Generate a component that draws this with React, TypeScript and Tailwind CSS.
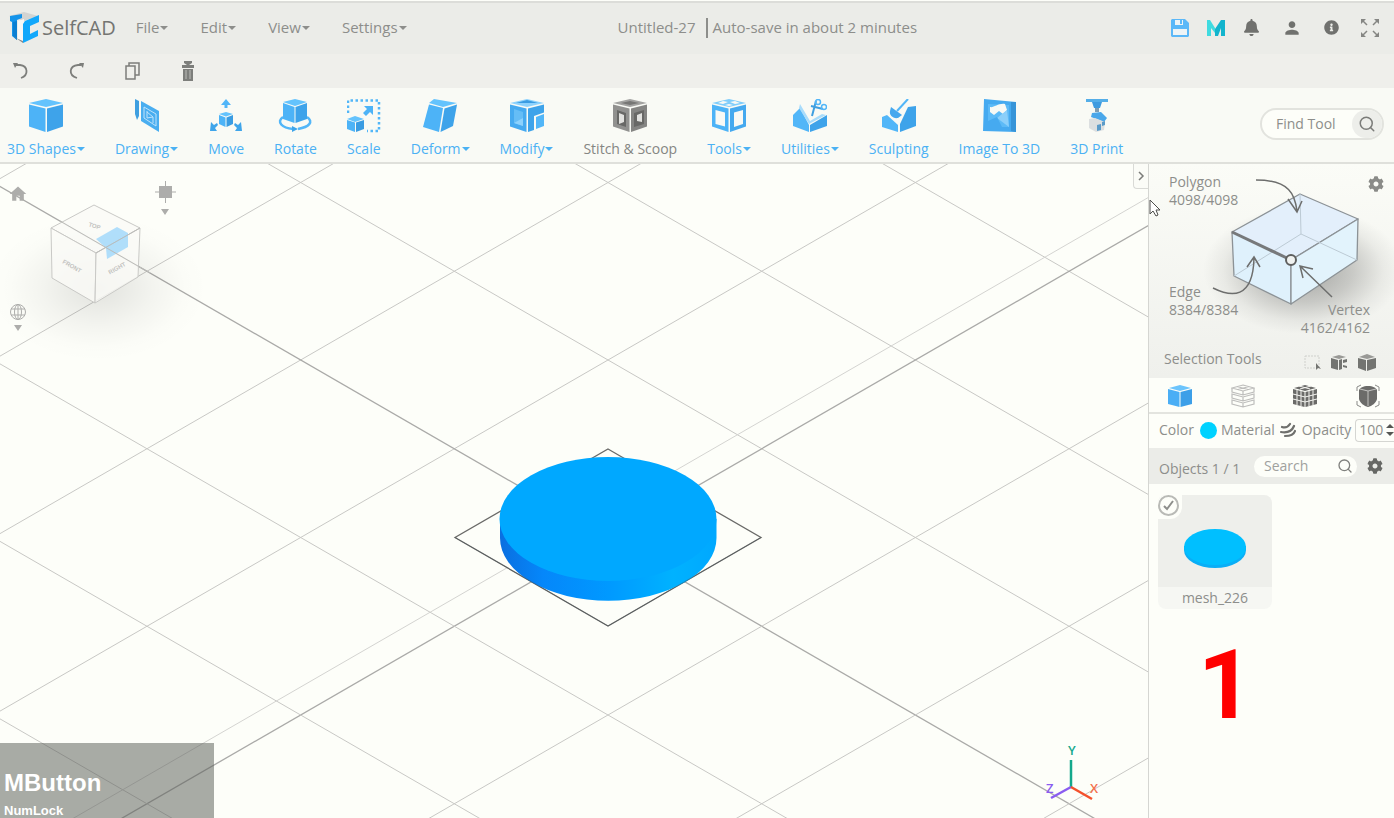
import React, { useState } from 'react';
import { FaBell, FaCog, FaInfoCircle } from 'react-icons/fa';
import { MdHome, MdPerson } from 'react-icons/md';
import { FiSearch } from 'react-icons/fi';

const menus = ['File', 'Edit', 'View', 'Settings'];

const Caret = () => (
    <svg width="8" height="4" viewBox="0 0 8 4" fill="currentColor" aria-hidden="true">
        <path d="M0 0h8L4 4z" />
    </svg>
);

const Logo = () => (
    <svg width="32" height="32" viewBox="0 0 32 32" aria-hidden="true">
        <path d="M1 4 16 0l14 4-14 5z" fill="#d3d4d2" />
        <path d="M2 4 14 2v4L9 8v20l-5-4V10L2 9z" fill="#1494ea" />
        <path d="M5 10l4-1v19l-4-4z" fill="#0b7fd2" />
        <path d="M10 9 16 7v23l-6-3z" fill="#f8f8f6" />
        <path d="M17 9 31 3v7l-9 4v8l8-4v6L15 31V12z" fill="#12a8fb" />
        <path d="M15 31 5 24l5 3 5 2z" fill="#8a8b89" />
    </svg>
);

const cube = (
    <>
        <path d="M17 0 34 4 17 8 0 4z" fill="#64c3fd" />
        <path d="M0 5.500 16.500 9.500V33L0 27.500z" fill="#4db3f7" />
        <path d="M18 9.500 34 5.500v22L18 33z" fill="#3ea3ea" />
    </>
);

const ribbon = [
    { label: '3D Shapes', menu: true, icon: cube },
    {
        label: 'Drawing',
        menu: true,
        icon: (
            <>
                <path d="M5 0l4 2v15l-2 4-2-6z" fill="#3f9fe0" />
                <path d="M11 2 29 12v21L11 22z" fill="#4aaef0" />
                <path d="M14 8l12 7v12l-12-8zM17 12v7l6-1-6-5M23 18v6" fill="none" stroke="#bfe3fb" strokeWidth="1" />
            </>
        ),
    },
    {
        label: 'Move',
        icon: (
            <>
                <path d="M17 0l5 6h-3.500v3h-3V6H12z" fill="#52b6f8" />
                <path d="M17 13l7 2-7 2.500-7-2.500z" fill="#64c3fd" />
                <path d="M10 16l6.500 2.500V28L10 25z" fill="#4db3f7" />
                <path d="M17.500 18.500 24 16v9l-6.500 3z" fill="#3a9ce2" />
                <path d="M1 32 2 23l3 3 3-2 1 2-3 3 2 3zM33 32l-1-9-3 3-3-2-1 2 3 3-2 3z" fill="#3fa5ea" />
            </>
        ),
    },
    {
        label: 'Rotate',
        icon: (
            <>
                <path d="M5 18C-2 23 4 29 15 30M29 18c7 5 2 10-9 12" fill="none" stroke="#52b6f8" strokeWidth="2.500" />
                <path d="M14 27l6 3-6 3z" fill="#3fa5ea" />
                <path d="M17 0l12 3-12 4L5 3z" fill="#64c3fd" />
                <path d="M5 4l11.500 4v16L5 20z" fill="#4db3f7" />
                <path d="M17.500 8 29 4v16l-11.500 4z" fill="#3ea3ea" />
            </>
        ),
    },
    {
        label: 'Scale',
        icon: (
            <>
                <path d="M1 14V1.500h31V32H20" fill="none" stroke="#52b6f8" strokeWidth="2.500" strokeDasharray="2.500 2.500" />
                <path d="M17 7h9v9l-3-3-4 4-3-3 4-4z" fill="#4db3f7" />
                <path d="M8 17l9 3-9 3-8-3z" fill="#64c3fd" />
                <path d="M0 21l8 2.500V33l-8-3z" fill="#4db3f7" />
                <path d="M9 23.500 17 21v9l-8 3z" fill="#3a9ce2" />
            </>
        ),
    },
    {
        label: 'Deform',
        menu: true,
        icon: (
            <>
                <path d="M11 0l23 4-14 4L6 4z" fill="#64c3fd" />
                <path d="M6 5.500 20 9l-4 24L0 28z" fill="#4db3f7" />
                <path d="M21.500 9.500 34 5.500 30 27l-12.500 6z" fill="#3ea3ea" />
            </>
        ),
    },
    {
        label: 'Modify',
        menu: true,
        icon: (
            <>
                <path d="M17 0 34 4 17 8 0 4z" fill="#8dd2fd" />
                <path d="M17 1l11 3H6z" fill="#3a9ce2" />
                <path d="M0 5.500 16.500 9.500V33L0 27.500z" fill="#46aaf0" />
                <path d="M4 10l9 3v14l-9-3z" fill="#65bdf6" />
                <path d="M4 24l9-5v8z" fill="#8dd2fd" />
                <path d="M18 9.500 34 5.500v8L24 17v14l-6 2z" fill="#3ea3ea" />
                <path d="M26 18l8-3v12l-8 3z" fill="#52b6f8" />
            </>
        ),
    },
    {
        label: 'Stitch & Scoop',
        gray: true,
        icon: (
            <>
                <path d="M17 0 34 4 17 8 0 4z" fill="#a3a3a1" />
                <path d="M17 2l9 2-9 2-9-2z" fill="#777775" />
                <path d="M0 5.500 16.500 9.500V33L0 27.500z" fill="#91918f" />
                <path d="M18 9.500 34 5.500v22L18 33z" fill="#858583" />
                <path d="M4 11l9 3v14l-9-3zM21 14l10-3v14l-10 3z" fill="#686866" />
                <path d="M6 14l5 2v7l-5 2zM24 16l5-2v9l-5-1z" fill="#e2e2df" />
            </>
        ),
    },
    {
        label: 'Tools',
        menu: true,
        icon: (
            <>
                <path d="M17 0 34 4 17 8 0 4z" fill="#7fcdfb" />
                <path d="M11 2l5 1-5 2-5-1zM23 2l5 2-5 1-5-2zM17 5l4 1-4 1-4-1z" fill="#f8f9f5" />
                <path d="M0 5.500 16.500 9.500V33L0 27.500z" fill="#4db3f7" />
                <path d="M18 9.500 34 5.500v22L18 33z" fill="#45a9ef" />
                <path d="M3.500 11 13 13.500v14L3.500 25zM22 13.500 31 11v14l-9 3z" fill="#f8f9f5" />
            </>
        ),
    },
    {
        label: 'Utilities',
        menu: true,
        icon: (
            <>
                <path d="M0 16 7 9l9 17v7L0 27z" fill="#52b6f8" />
                <path d="M17 26 34 16v11l-17 6z" fill="#3ea3ea" />
                <path d="M7 5l10 17 12-7 4 1-17 9L6 9z" fill="#a9dcfb" />
                <path d="M23 2 19 17M30 10 18 7" stroke="#3f9fe0" strokeWidth="2" />
                <circle cx="25" cy="3" r="2.500" fill="none" stroke="#52b6f8" strokeWidth="1.500" />
                <circle cx="31" cy="8" r="2.500" fill="none" stroke="#52b6f8" strokeWidth="1.500" />
            </>
        ),
    },
    {
        label: 'Sculpting',
        icon: (
            <>
                <path d="M0 18l5-2 11 10v7L0 28z" fill="#52b6f8" />
                <path d="M18 25 26 8l8-1v20l-16 6z" fill="#3ea3ea" />
                <path d="M26 0 15 12" stroke="#52b6f8" strokeWidth="2" />
                <path d="M9 8l11 8-4 3c-5 1-9-3-8-7z" fill="#46a8ee" />
            </>
        ),
    },
    {
        label: 'Image To 3D',
        icon: (
            <>
                <path d="M2 0l32 3v30L1 32z" fill="#46aaf0" />
                <path d="M29 3l5 0v30l-5-1z" fill="#3794d8" />
                <path d="M6 5l21 1v22L6 28z" fill="#5cbaf7" />
                <path d="M8 8c4 1 8-4 15-3l2 6-4 4-4-3-5 4-4-3z" fill="#f8f9f5" />
                <path d="M15 19l10-8 2 17z" fill="#8bcffa" />
                <path d="M6 22l9-4 5 10H6z" fill="#46aaf0" />
            </>
        ),
    },
    {
        label: '3D Print',
        icon: (
            <>
                <path d="M6 0h22v3H6z" fill="#55aee8" />
                <path d="M12 3h10l-2 6h-6z" fill="#3f9be0" />
                <path d="M15 9h4v4h-4z" fill="#7f9db3" />
                <path d="M12 14l9-1 6 6-3 4-13-5z" fill="#4aa7ea" />
                <path d="M9 20l6-1 10 4-1 8-8 2-7-4z" fill="#dcdfe0" />
                <path d="M17 26l4-1v6l-4 1zM22 23l3-1v4l-3 1z" fill="#5b9bc8" />
            </>
        ),
    },
];

const SmallCube = ({ kind }: { kind: string }) => (
    <svg width="24" height="24" viewBox="0 0 24 24" aria-hidden="true">
        {kind === 'solid' && (
            <>
                <path d="M12 1l11 3-11 3L1 4z" fill="#6cc4fc" />
                <path d="M0 5l11.500 3v15L0 20z" fill="#4aaef5" />
                <path d="M12.500 8 24 5v15l-11.500 3z" fill="#3c9fe8" />
            </>
        )}
        {kind === 'layers' && (
            <g fill="none" stroke="#bdbdbb" strokeWidth="1.200">
                <path d="M12 1l11 3-11 3L1 4zM6 2.500l11 3M18 2.500l-11 3" />
                <path d="M1 4v4l11 3 11-3V4M12 7v4" />
                <path d="M1 10v4l11 3 11-3v-4l-11 3zM12 13v4" />
                <path d="M1 16v4l11 3 11-3v-4l-11 3zM12 19v4" />
            </g>
        )}
        {kind === 'grid' && (
            <>
                <path d="M12 1l11 3-11 3L1 4z" fill="#6b6b69" />
                <path d="M0 5l11.500 3v15L0 20z" fill="#6b6b69" />
                <path d="M12.500 8 24 5v15l-11.500 3z" fill="#6b6b69" />
                <path
                    d="M0 10l12 3 12-3M0 15l12 3 12-3M4 6v15M8 7v15M16 7v15M20 6v15M6 2l11 3M18 2 7 5"
                    fill="none"
                    stroke="#f4f4f0"
                    strokeWidth="1"
                />
            </>
        )}
        {kind === 'round' && (
            <>
                <path d="M12 2c5 0 8 2 9 4v9c-1 4-5 7-9 8-4-1-8-4-9-8V6c1-2 4-4 9-4z" fill="#6b6b69" />
                <path d="M12 7v15M4 5l8 2 8-2" fill="none" stroke="#c4c4c1" strokeWidth="1" />
                <path d="M1 7V3l4-2M19 1l4 2v4M1 17v4l4 2M19 23l4-2v-4" fill="none" stroke="#8a8a88" strokeWidth="1" />
            </>
        )}
    </svg>
);

// Isometric floor grid: both line families share one step and one slope
const GRID_STEP = 177.5;
const SLOPE = 0.5775;
const CX = 608;
const CY = 373.5;
const steps = [-4, -3, -2, -1, 0, 1, 2, 3, 4];

const Scene = () => (
    <svg className="absolute inset-0 h-full w-full" viewBox="0 0 1148 654" preserveAspectRatio="xMidYMid slice" aria-label="3D scene">
        <defs>
            <linearGradient id="rim" x1="0" x2="1">
                <stop offset="0" stopColor="#0a6fe0" />
                <stop offset="0.2" stopColor="#0587fa" />
                <stop offset="0.5" stopColor="#0099ff" />
                <stop offset="0.8" stopColor="#00b2ff" />
                <stop offset="1" stopColor="#00a8ff" />
            </linearGradient>
        </defs>
        {steps.map((k) => (
            <g key={k} stroke={k === 0 ? '#aaaaa8' : '#c8c8c5'} strokeWidth={k === 0 ? 1.3 : 1}>
                <line x1={-200} x2={1348} y1={CY + k * GRID_STEP + SLOPE * (-200 - CX)} y2={CY + k * GRID_STEP + SLOPE * (1348 - CX)} />
                <line x1={-200} x2={1348} y1={CY + k * GRID_STEP - SLOPE * (-200 - CX)} y2={CY + k * GRID_STEP - SLOPE * (1348 - CX)} />
            </g>
        ))}
        <line x1={-200} x2={1348} y1={CY - 28 - SLOPE * (-200 - CX)} y2={CY - 28 - SLOPE * (1348 - CX)} stroke="#d4d4d1" />
        <path d="M608 285 761 373.500 608 462 455 373.500z" fill="#fdfef9" stroke="#6a6a68" strokeWidth="1.300" />
        <path d="M500 355v19a108 62.500 0 0 0 216.500 0v-19z" fill="url(#rim)" />
        <ellipse cx="608" cy="355" rx="108.500" ry="62" fill="#00a8ff" />
        <path d="M455 373.500 608 462 761 373.500" fill="none" stroke="#3e4a52" strokeWidth="1" opacity="0.4" />
    </svg>
);

const ViewCube = () => (
    <div className="absolute top-0 left-0 text-[#adadab]">
        <svg width="220" height="200" viewBox="0 0 220 200" aria-label="View cube">
            <defs>
                <radialGradient id="shade">
                    <stop offset="0" stopColor="#000" stopOpacity="0.110" />
                    <stop offset="0.5" stopColor="#000" stopOpacity="0.040" />
                    <stop offset="0.8" stopColor="#000" stopOpacity="0.008" />
                    <stop offset="1" stopColor="#000" stopOpacity="0" />
                </radialGradient>
            </defs>
            <ellipse cx="98" cy="124" rx="110" ry="74" fill="url(#shade)" />
            <g fill="#fafaf6" fillOpacity="0.820" stroke="#c9c9c6" strokeWidth="1">
                <path d="M94 41l46 23-44 25-45-25z" />
                <path d="M51 64l45 25-1 50-43-25z" />
                <path d="M140 64 96 89l-1 50 43-26z" />
            </g>
            <path d="M96 75l21-12 11 6v14l-21 12-1-11z" fill="#9dd7fb" fillOpacity="0.800" />
            <path d="M96 89 140 64M60 57 150 109" stroke="#bcbcb9" />
            <g fontFamily="Liberation Sans, sans-serif" fontSize="6" fontWeight="700" fill="#c2c2bf" textAnchor="middle">
                <text transform="translate(94 64) rotate(16)">TOP</text>
                <text transform="translate(71 104) rotate(29)">FRONT</text>
                <text transform="translate(118 106) rotate(-29)">RIGHT</text>
            </g>
            <g stroke="currentColor" fill="currentColor">
                <path d="M159 22h13v12h-13z" stroke="none" />
                <path d="M165.500 17v22M155 28h21" />
                <path d="M161 45h8l-4 6zM14 161h8l-4 6z" stroke="none" />
                <circle cx="18" cy="148" r="7.500" fill="none" />
                <ellipse cx="18" cy="148" rx="3.500" ry="7.500" fill="none" />
                <path d="M11 145h14M11 151h14M18 140v16" />
            </g>
        </svg>
    </div>
);

const StatsDrawing = () => (
    <svg className="absolute inset-0" width="245" height="214" viewBox="0 0 245 214" aria-hidden="true">
        <defs>
            <radialGradient id="boxShade">
                <stop offset="0" stopColor="#000" stopOpacity="0.340" />
                <stop offset="0.5" stopColor="#000" stopOpacity="0.180" />
                <stop offset="0.800" stopColor="#000" stopOpacity="0.050" />
                <stop offset="1" stopColor="#000" stopOpacity="0" />
            </radialGradient>
        </defs>
        <ellipse cx="154" cy="106" rx="100" ry="64" fill="url(#boxShade)" />
        <g stroke="#8c9296" strokeWidth="1.300" strokeLinejoin="round">
            <path d="M151 30l58 25-67 41-59-28z" fill="#e3effb" />
            <path d="M83 68l59 28v44l-57-28z" fill="#dff1fc" />
            <path d="M209 55l-67 41v44l66-44z" fill="#e2f3fc" />
        </g>
        <path d="M151 30l1 40-67 42M152 70l56 26" fill="none" stroke="#bccad4" />
        <path d="M83 68l59 28" stroke="#77797b" strokeWidth="3" />
        <circle cx="142" cy="96" r="5" fill="#f0f2f0" stroke="#5e5f5e" strokeWidth="2" />
        <g fill="none" stroke="#6d6e6d" strokeWidth="1.500">
            <path d="M107 16c34 0 39 15 41 31M139 35l9 13 5-11" />
            <path d="M64 124c18 9 40 12 41-30M98 103l7-10 6 10" />
            <path d="M183 133l-32-31M164 105l-13-3 3 12" />
        </g>
    </svg>
);

export default function App() {
    const [tool, setTool] = useState('');
    const [search, setSearch] = useState('');
    const [opacity, setOpacity] = useState('100');

    return (
        <div className="flex min-h-screen flex-col bg-[#fdfef9] font-['Open_Sans',sans-serif] text-[#8d8e8b]">
            <header className="mt-px flex h-[53px] items-center border-t-2 border-[#dcddd9] bg-[#ebece8] pr-[15px] pb-[2px] pl-2 text-[15px]">
                <a href="#home" className="flex items-center gap-[2px] text-xl text-[#747572]">
                    <Logo />
                    SelfCAD
                </a>
                <nav className="ml-5 flex gap-8">
                    {menus.map((m) => (
                        <button key={m} className="flex items-center gap-px">
                            {m}
                            <Caret />
                        </button>
                    ))}
                </nav>
                <div className="ml-[211px] flex items-center gap-[10px]">
                    <span>Untitled-27</span>
                    <span className="flex items-center gap-[5px]">
                        <span className="h-5 w-[2px] bg-[#8d8e8b]" />
                        <span>Auto-save in about 2 minutes</span>
                    </span>
                </div>
                <div className="ml-auto flex items-center gap-[18px] text-[#70716e]">
                    <button aria-label="Save">
                        <svg width="18" height="18" viewBox="0 0 18 18">
                            <path d="M1 0h13l4 4v13l-1 1H1l-1-1V1z" fill="#5bb8f8" />
                            <path d="M4 1h8v5H4zM2 10h14v6H2z" fill="#eef4f6" />
                            <path d="M9 1h2v4H9z" fill="#5bb8f8" />
                        </svg>
                    </button>
                    <button aria-label="MyMiniFactory">
                        <svg width="18" height="18" viewBox="0 0 18 18">
                            <path d="M0 1h3l5 8v5l-4-5v8H0z" fill="#3fdbe0" />
                            <path d="M8 10l6-9h4v16h-4V9l-3 8H8z" fill="#12b4cd" />
                        </svg>
                    </button>
                    <button aria-label="Notifications"><FaBell size={17} /></button>
                    <button aria-label="Account" className="ml-1"><MdPerson size={20} /></button>
                    <button aria-label="Info" className="ml-1"><FaInfoCircle size={15} /></button>
                    <button aria-label="Full screen" className="ml-1">
                        <svg width="18" height="18" viewBox="0 0 18 18" fill="#858683" stroke="#858683">
                            <path d="M0 0h5L0 5zM18 0v5l-5-5zM0 18v-5l5 5zM18 18h-5l5-5z" stroke="none" />
                            <path d="M2 2l4 4M16 2l-4 4M2 16l4-4M16 16l-4-4" strokeWidth="1.500" />
                        </svg>
                    </button>
                </div>
            </header>

            <div className="flex h-[34px] items-center gap-10 bg-[#efefeb] pl-[13px] text-[#7d7e7b]">
                <button aria-label="Undo">
                    <svg width="16" height="18" viewBox="0 0 16 18" fill="none" stroke="currentColor" strokeWidth="1.800">
                        <path d="M3 3h4c8 1 9 10 1 13" />
                        <path d="M0 1h5L2 6z" fill="currentColor" stroke="none" />
                    </svg>
                </button>
                <button aria-label="Redo">
                    <svg width="16" height="18" viewBox="0 0 16 18" fill="none" stroke="currentColor" strokeWidth="1.800">
                        <path d="M12 3H9C0 4-1 13 8 16" />
                        <path d="M10 1h5l-1 5z" fill="currentColor" stroke="none" />
                    </svg>
                </button>
                <button aria-label="Copy">
                    <svg width="16" height="18" viewBox="0 0 16 18" fill="none" stroke="currentColor" strokeWidth="1.500">
                        <path d="M1 4h9v13H1z" />
                        <path d="M4 4V1h10v12h-4" />
                    </svg>
                </button>
                <button aria-label="Delete">
                    <svg width="14" height="20" viewBox="0 0 14 20" fill="currentColor">
                        <path d="M3 0h8v2L8 4h5v3H1V4h5L3 2z" />
                        <path d="M2 8h10v12H2z" />
                        <path d="M5 9v9M9 9v9" stroke="#bdbdba" />
                    </svg>
                </button>
            </div>

            <div className="flex h-[76px] items-start justify-between border-b-2 border-[#dfe0db] bg-[#f9faf5] pt-[11px] pr-[10px] pl-[7px]">
                <div className="flex gap-[30px] text-sm leading-[18px] text-[#4bb1f4]">
                    {ribbon.map((r) => (
                        <button key={r.label} className="flex flex-col items-center gap-[7px]">
                            <svg width="34" height="34" viewBox="0 0 34 34" aria-hidden="true">{r.icon}</svg>
                            <span className={r.gray ? 'whitespace-nowrap text-[#858683]' : 'flex items-center gap-px whitespace-nowrap'}>
                                {r.label}
                                {r.menu && <Caret />}
                            </span>
                        </button>
                    ))}
                </div>
                <label className="mt-[9px] flex h-8 w-[124px] shrink-0 items-center rounded-full border-2 border-[#e2e3de] bg-[#fdfef9] pl-[14px]">
                    <input
                        type="text"
                        aria-label="Find Tool"
                        placeholder="Find Tool"
                        value={tool}
                        onChange={(e) => setTool(e.target.value)}
                        className="w-full min-w-0 bg-transparent text-sm outline-none placeholder:text-[#8d8e8b]"
                    />
                    <span className="flex h-7 w-[30px] shrink-0 items-center justify-center rounded-full bg-[#edeeea] text-[#7b7c79]">
                        <FiSearch size={18} />
                    </span>
                </label>
            </div>

            <main className="flex flex-1">
                <section className="relative min-w-0 flex-1 overflow-hidden">
                    <Scene />
                    <ViewCube />
                    <button aria-label="Home view" className="absolute top-5 left-2 text-[#adadab]">
                        <MdHome size={20} />
                    </button>
                    <button aria-label="Collapse panel" className="absolute top-0 right-0 flex h-[25px] w-[15px] items-center justify-center rounded-bl border-b border-l border-[#d9dad6] bg-[#fbfcf7]">
                        <svg width="7" height="10" viewBox="0 0 7 10" fill="none" stroke="#7b7c79" strokeWidth="1.500">
                            <path d="M1 1l4 4-4 4" />
                        </svg>
                    </button>
                    <svg className="absolute right-[41px] bottom-3 font-['Open_Sans',sans-serif]" width="64" height="64" viewBox="0 0 64 64" strokeWidth="2.500" fontSize="13" fontWeight="600" aria-label="Axes">
                        <path d="M28 45V18" stroke="#14a88c" />
                        <path d="M28 45 8 56" stroke="#8a5cf0" />
                        <path d="M28 45l21 12" stroke="#f4512c" />
                        <text x="25" y="13" fill="#14a88c">Y</text>
                        <text x="3" y="51" fill="#8a5cf0">Z</text>
                        <text x="47" y="51" fill="#f4714c">X</text>
                    </svg>
                    <div className="absolute bottom-0 left-0 flex h-[75px] w-[214px] flex-col bg-[#5b5d59]/52 pt-[26px] pl-1 font-['Liberation_Sans',sans-serif] font-bold text-white">
                        <span className="text-2xl leading-7">MButton</span>
                        <span className="mt-[6px] text-[13px] leading-[15px]">NumLock</span>
                    </div>
                </section>

                <aside className="relative flex w-[246px] shrink-0 flex-col border-l border-[#d5d6d2] text-sm">
                    <div className="relative h-[214px] bg-linear-to-b from-[#fbfcf7] to-[#eff0ec] pt-[9px] pr-[10px] pl-5 leading-[18px]">
                        <StatsDrawing />
                        <div className="relative flex items-start justify-between">
                            <div>
                                <p>Polygon</p>
                                <p>4098/4098</p>
                            </div>
                            <button aria-label="Display settings" className="mt-[3px] text-[#8a8b88]"><FaCog size={16} /></button>
                        </div>
                        <div className="relative mt-[74px] flex justify-between pr-[14px]">
                            <div>
                                <p>Edge</p>
                                <p>8384/8384</p>
                            </div>
                            <div className="pt-[18px] text-right">
                                <p>Vertex</p>
                                <p>4162/4162</p>
                            </div>
                        </div>
                        <div className="relative mt-[13px] -ml-[5px] flex items-start justify-between">
                            <h2>Selection Tools</h2>
                            <div className="mt-1 mr-2 flex h-4 items-center gap-[10px] text-[#737471]">
                                <button aria-label="Box select">
                                    <svg width="17" height="17" viewBox="0 0 17 17">
                                        <path d="M1 2h14v12H1z" fill="none" stroke="#cfd0cc" strokeDasharray="2 1" />
                                        <path d="M12 9l5 6-3-1-2 2z" fill="currentColor" />
                                    </svg>
                                </button>
                                <button aria-label="Select by part">
                                    <svg width="17" height="17" viewBox="0 0 17 17" fill="currentColor">
                                        <path d="M8 1l7 2-7 2-7-2z" opacity="0.700" />
                                        <path d="M0 4l7 2v10l-7-2zM8 6l3-1v10l-3 1zM12 6l4-1v3l-4 1zM12 11l4 1v2l-4-1z" />
                                    </svg>
                                </button>
                                <button aria-label="Select through">
                                    <svg width="18" height="17" viewBox="0 0 18 17" fill="currentColor">
                                        <path d="M9 0l8 3-8 2-8-2z" opacity="0.700" />
                                        <path d="M0 4l8 2v11l-8-3zM9 6l9-2v10l-9 3z" />
                                    </svg>
                                </button>
                            </div>
                        </div>
                    </div>

                    <div className="flex h-9 items-center justify-between border-b-2 border-[#e3e4df] pt-px pr-[14px] pl-[19px]">
                        <button aria-label="Object"><SmallCube kind="solid" /></button>
                        <button aria-label="Edges"><SmallCube kind="layers" /></button>
                        <button aria-label="Polygons"><SmallCube kind="grid" /></button>
                        <button aria-label="Vertices"><SmallCube kind="round" /></button>
                    </div>

                    <div className="flex h-[34px] items-center pb-[2px] pl-[10px]">
                        <button className="flex items-center gap-[6px]">
                            Color
                            <span className="h-[17px] w-[17px] rounded-full bg-[#00d2ff]" />
                        </button>
                        <button className="ml-1 flex items-center gap-[5px]">
                            Material
                            <svg width="16" height="16" viewBox="0 0 16 16" fill="none" stroke="#6f706d" strokeWidth="2.200" strokeLinecap="round">
                                <path d="M2 5c3 1 6 0 8-3M1 10c6 1 11-1 13-6M5 14c5 0 9-2 10-5" />
                            </svg>
                        </button>
                        <label htmlFor="opacity" className="ml-[6px]">Opacity</label>
                        <span className="ml-1 flex h-[23px] flex-1 items-center rounded-l border border-r-0 border-[#d5d6d2] pl-[3px]">
                            <input
                                id="opacity"
                                type="text"
                                inputMode="numeric"
                                value={opacity}
                                onChange={(e) => setOpacity(e.target.value)}
                                className="w-[27px] bg-transparent outline-none"
                            />
                            <svg width="8" height="12" viewBox="0 0 8 12" className="shrink-0" fill="#555653">
                                <path d="M0 4l4-4 4 4zM0 8h8l-4 4z" />
                            </svg>
                        </span>
                    </div>

                    <div className="flex h-9 items-center bg-[#ebece8] pr-[11px] pl-[10px]">
                        <h2 className="mt-[6px] whitespace-nowrap">Objects 1 / 1</h2>
                        <label className="ml-auto flex h-[21px] w-[103px] items-center rounded-full bg-[#fdfef9] pr-1 pl-[10px]">
                            <input
                                type="text"
                                aria-label="Search objects"
                                placeholder="Search"
                                value={search}
                                onChange={(e) => setSearch(e.target.value)}
                                className="w-full min-w-0 bg-transparent outline-none placeholder:text-[#a0a19e]"
                            />
                            <FiSearch size={16} className="shrink-0 text-[#80817e]" />
                        </label>
                        <button aria-label="Object settings" className="ml-[10px] text-[#676865]"><FaCog size={16} /></button>
                    </div>

                    <div className="px-[9px] pt-[11px]">
                        <div className="relative w-[114px] overflow-hidden rounded-lg bg-[#f6f7f3]">
                            <div className="flex h-[92px] items-center justify-center bg-[#eeefeb] pt-4">
                                <svg width="64" height="42" viewBox="0 0 64 42" aria-hidden="true">
                                    <path d="M1 18v4a31 18 0 0 0 62 0v-4z" fill="#0aaef6" />
                                    <ellipse cx="32" cy="19" rx="31" ry="18" fill="#00bfff" />
                                </svg>
                            </div>
                            <p className="text-center leading-[22px]">mesh_226</p>
                            <label className="absolute top-0 left-0 flex h-6 w-6 items-start rounded-br-xl bg-[#fdfef9]">
                                <input type="checkbox" defaultChecked aria-label="Select mesh_226" className="peer h-[21px] w-[21px] appearance-none rounded-full border-2 border-[#b9bab6]" />
                                <svg className="absolute top-[5px] left-[5px] hidden peer-checked:block" width="11" height="11" viewBox="0 0 11 11" fill="none" stroke="#8d8e8b" strokeWidth="2">
                                    <path d="M1 6l3 3 6-8" />
                                </svg>
                            </label>
                        </div>
                        <p className="mt-7 ml-10 font-['Roboto',sans-serif] text-8xl leading-none font-bold text-[#ff0000]">1</p>
                    </div>

                    <svg className="absolute top-[35px] left-0" width="12" height="18" viewBox="0 0 12 18" fill="#fff" stroke="#4c4d4a" aria-hidden="true">
                        <path d="M1 1v14l3-3 3 5 2-1-2-5h4z" />
                    </svg>
                </aside>
            </main>
        </div>
    );
}
